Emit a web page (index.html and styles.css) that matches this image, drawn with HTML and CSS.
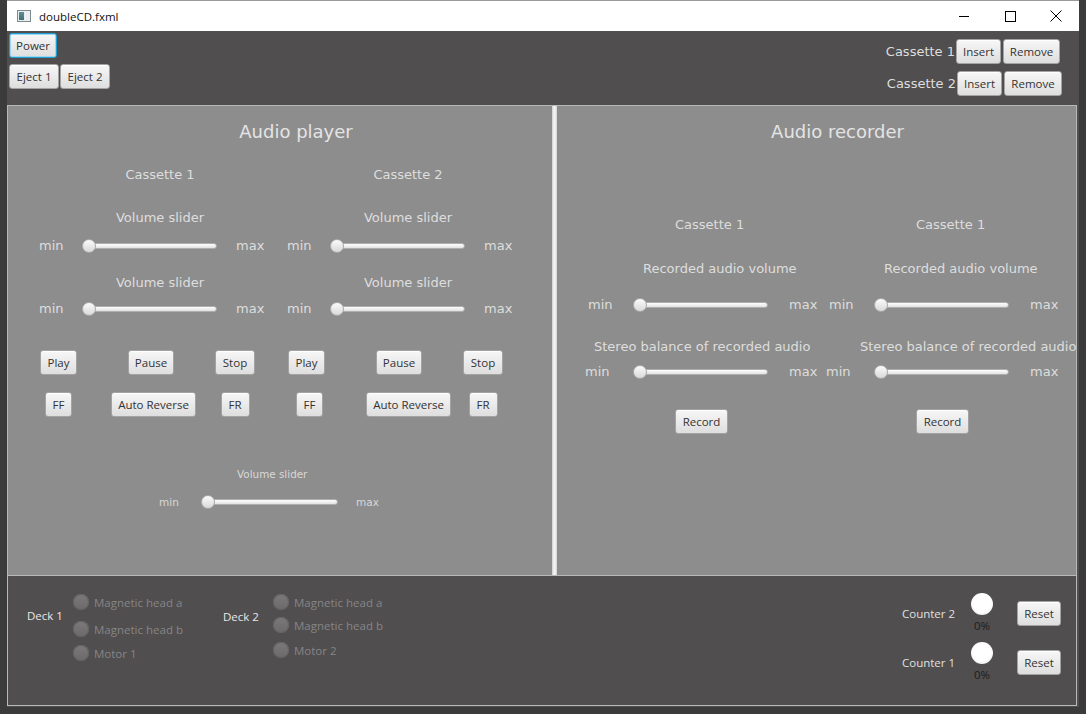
FILE: index.html
```html
<!DOCTYPE html>
<html>
<head>
<meta charset="utf-8">
<title>doubleCD.fxml</title>
<link rel="stylesheet" href="styles.css">
</head>
<body>
<div class="window">
  <div class="titlebar">
    <span class="app-icon"><span class="app-icon-pane"></span></span>
    <span class="title">doubleCD.fxml</span>
    <div class="caption">
      <span class="cap-btn"><svg width="10" height="10" viewBox="0 0 10 10"><path d="M0 5.5H10" stroke="#000" stroke-width="1"/></svg></span>
      <span class="cap-btn"><svg width="11" height="11" viewBox="0 0 11 11"><rect x="0.5" y="0.5" width="10" height="10" fill="none" stroke="#000" stroke-width="1"/></svg></span>
      <span class="cap-btn"><svg width="12" height="12" viewBox="0 0 12 12"><path d="M0.5 0.5L11.5 11.5M11.5 0.5L0.5 11.5" stroke="#000" stroke-width="1"/></svg></span>
    </div>
  </div>

  <div class="content">
    <div class="topbar">
      <div class="top-left">
        <button class="btn btn-focus w-power">Power</button>
        <div class="eject-row">
          <button class="btn w-eject">Eject 1</button>
          <button class="btn w-eject">Eject 2</button>
        </div>
      </div>
      <div class="top-right">
        <div class="cas-row cas-row-1">
          <span class="lbl cas-label">Cassette 1</span>
          <button class="btn w-insert">Insert</button>
          <button class="btn w-remove">Remove</button>
        </div>
        <div class="cas-row cas-row-2">
          <span class="lbl cas-label">Cassette 2</span>
          <button class="btn w-insert">Insert</button>
          <button class="btn w-remove2">Remove</button>
        </div>
      </div>
    </div>

    <div class="stage">
      <div class="panels">
        <section class="panel player">
          <div class="lbl p-title">Audio player</div>
          <div class="p-cols">
            <div class="p-col">
              <div class="lbl cas-title">Cassette 1</div>
              <div class="lbl vol-title vt1">Volume slider</div>
              <div class="srow ps1">
                <span class="lbl smin">min</span>
                <div class="slider"><div class="track"></div><div class="thumb"></div></div>
                <span class="lbl smax">max</span>
              </div>
              <div class="lbl vol-title vt2">Volume slider</div>
              <div class="srow ps2">
                <span class="lbl smin">min</span>
                <div class="slider"><div class="track"></div><div class="thumb"></div></div>
                <span class="lbl smax">max</span>
              </div>
              <div class="brow brow1">
                <button class="btn w-play">Play</button>
                <button class="btn w-pause">Pause</button>
                <button class="btn w-stop">Stop</button>
              </div>
              <div class="brow brow2">
                <button class="btn w-ff">FF</button>
                <button class="btn w-ar ar1">Auto Reverse</button>
                <button class="btn w-fr">FR</button>
              </div>
            </div>
            <div class="p-col">
              <div class="lbl cas-title">Cassette 2</div>
              <div class="lbl vol-title vt1">Volume slider</div>
              <div class="srow ps1">
                <span class="lbl smin">min</span>
                <div class="slider"><div class="track"></div><div class="thumb"></div></div>
                <span class="lbl smax">max</span>
              </div>
              <div class="lbl vol-title vt2">Volume slider</div>
              <div class="srow ps2">
                <span class="lbl smin">min</span>
                <div class="slider"><div class="track"></div><div class="thumb"></div></div>
                <span class="lbl smax">max</span>
              </div>
              <div class="brow brow1">
                <button class="btn w-play">Play</button>
                <button class="btn w-pause">Pause</button>
                <button class="btn w-stop">Stop</button>
              </div>
              <div class="brow brow2">
                <button class="btn w-ff ff2">FF</button>
                <button class="btn w-ar ar2">Auto Reverse</button>
                <button class="btn w-fr">FR</button>
              </div>
            </div>
          </div>
          <div class="master">
            <div class="lbl master-title">Volume slider</div>
            <div class="srow master-row">
              <span class="lbl smin">min</span>
              <div class="slider slider-master"><div class="track"></div><div class="thumb"></div></div>
              <span class="lbl smax">max</span>
            </div>
          </div>
        </section>

        <div class="divider"></div>

        <section class="panel recorder">
          <div class="lbl r-title">Audio recorder</div>
          <div class="r-cols">
            <div class="r-col">
              <div class="lbl rc-cas">Cassette 1</div>
              <div class="lbl rc-rec">Recorded audio volume</div>
              <div class="srow rs1">
                <span class="lbl smin">min</span>
                <div class="slider"><div class="track"></div><div class="thumb"></div></div>
                <span class="lbl smax">max</span>
              </div>
              <div class="lbl rc-stereo">Stereo balance of recorded audio</div>
              <div class="srow rs2">
                <span class="lbl smin">min</span>
                <div class="slider"><div class="track"></div><div class="thumb"></div></div>
                <span class="lbl smax">max</span>
              </div>
              <button class="btn w-record">Record</button>
            </div>
            <div class="r-col">
              <div class="lbl rc-cas">Cassette 1</div>
              <div class="lbl rc-rec">Recorded audio volume</div>
              <div class="srow rs1">
                <span class="lbl smin">min</span>
                <div class="slider"><div class="track"></div><div class="thumb"></div></div>
                <span class="lbl smax">max</span>
              </div>
              <div class="lbl rc-stereo rc-stereo-b">Stereo balance of recorded audio</div>
              <div class="srow rs2">
                <span class="lbl smin">min</span>
                <div class="slider"><div class="track"></div><div class="thumb"></div></div>
                <span class="lbl smax">max</span>
              </div>
              <button class="btn w-record">Record</button>
            </div>
          </div>
        </section>
      </div>

      <div class="status">
        <div class="deck deck-1">
          <span class="deck-label">Deck 1</span>
          <div class="radio-list">
            <div class="radio-row"><span class="radio"></span><span class="radio-text">Magnetic head a</span></div>
            <div class="radio-row d1r2"><span class="radio"></span><span class="radio-text">Magnetic head b</span></div>
            <div class="radio-row d1r3"><span class="radio"></span><span class="radio-text">Motor 1</span></div>
          </div>
        </div>
        <div class="deck deck-2">
          <span class="deck-label">Deck 2</span>
          <div class="radio-list">
            <div class="radio-row"><span class="radio"></span><span class="radio-text">Magnetic head a</span></div>
            <div class="radio-row d2r2"><span class="radio"></span><span class="radio-text">Magnetic head b</span></div>
            <div class="radio-row d2r3"><span class="radio"></span><span class="radio-text">Motor 2</span></div>
          </div>
        </div>
        <div class="counters">
          <div class="counter-row">
            <span class="c-label">Counter 2</span>
            <div class="c-dial"><span class="c-circle"></span><span class="c-pct">0%</span></div>
            <button class="btn w-reset">Reset</button>
          </div>
          <div class="counter-row">
            <span class="c-label">Counter 1</span>
            <div class="c-dial"><span class="c-circle"></span><span class="c-pct">0%</span></div>
            <button class="btn w-reset">Reset</button>
          </div>
        </div>
      </div>
    </div>
  </div>
</div>
</body>
</html>
```

FILE: styles.css
```css
* { box-sizing: border-box; }

html, body {
  margin: 0;
  padding: 0;
}

body {
  width: 1086px;
  height: 714px;
  overflow: hidden;
  background: #3b3b3b;
  font-family: "Open Sans", "Liberation Sans", sans-serif;
}

.window {
  margin-left: 7px;
  width: 1072px;
  height: 707px;
  display: flex;
  flex-direction: column;
}

/* ---------- title bar ---------- */
.titlebar {
  height: 31px;
  background: #ffffff;
  display: flex;
  align-items: center;
  border-top: 1px solid #9a9a9a;
}

.app-icon {
  margin-left: 10px;
  width: 14px;
  height: 12px;
  border: 1px solid #7f8a8e;
  background: #e9eef0;
  display: flex;
  padding: 1px;
}

.app-icon-pane {
  width: 5px;
  height: 8px;
  background: linear-gradient(#5f8f95, #3e6f73);
}

.title {
  margin-left: 8px;
  font-size: 11.5px;
  color: #111;
}

.caption {
  margin-left: auto;
  display: flex;
}

.cap-btn {
  width: 46px;
  height: 30px;
  display: flex;
  align-items: center;
  justify-content: center;
}

/* ---------- content ---------- */
.content {
  flex: 1;
  background: #504e4f;
  display: flex;
  flex-direction: column;
}

.topbar {
  height: 74px;
  display: flex;
  justify-content: space-between;
}

.top-left {
  padding: 2px 0 0 2px;
  display: flex;
  flex-direction: column;
  align-items: flex-start;
}

.eject-row {
  margin-top: 6px;
  display: flex;
  gap: 1px;
}

.top-right {
  padding-top: 8px;
  display: flex;
  flex-direction: column;
  align-items: flex-end;
  gap: 7px;
}

.cas-row {
  display: flex;
  align-items: center;
  gap: 2px;
}

.cas-row-1 { padding-right: 19px; }
.cas-row-2 { padding-right: 17px; }

.cas-label {
  margin-right: -1px;
  color: #e2e2e2;
}

/* ---------- buttons ---------- */
.btn {
  font-family: "Open Sans", "Liberation Sans", sans-serif;
  font-size: 11.5px;
  color: #333333;
  height: 25px;
  padding: 0;
  border: 1px solid #a3a3a3;
  border-radius: 3px;
  background: linear-gradient(#f7f7f7, #dedede);
  box-shadow: inset 0 1px 0 #ffffff;
  display: inline-flex;
  align-items: center;
  justify-content: center;
  white-space: nowrap;
  flex: none;
}

.btn-focus {
  border-color: #1d9fd6;
  box-shadow: inset 0 0 0 1px #9fd6ee;
}

.w-power { width: 48px; }
.w-eject { width: 50px; }
.w-insert { width: 45px; }
.w-remove { width: 57px; }
.w-remove2 { width: 58px; }
.w-play { width: 37px; }
.w-pause { width: 46px; }
.w-stop { width: 40px; }
.w-ff { width: 27px; }
.w-ar { width: 85px; }
.w-fr { width: 29px; }
.w-record { width: 53px; }
.w-reset { width: 44px; }

/* ---------- labels ---------- */
.lbl {
  font-family: "DejaVu Sans", Verdana, sans-serif;
  font-size: 13px;
  line-height: 16px;
  color: #dedede;
  white-space: nowrap;
}

/* ---------- stage ---------- */
.stage {
  width: 1070px;
  height: 601px;
  border: 1px solid #b8b8b8;
  display: flex;
  flex-direction: column;
}

.panels {
  height: 470px;
  display: flex;
  border-bottom: 1px solid #b8b8b8;
}

.panel {
  background: #8d8d8d;
  overflow: hidden;
}

.player { width: 544px; }
.recorder { width: 519px; }

.divider {
  width: 5px;
  background: linear-gradient(to right, #cfcfcf, #f4f4f4 40%, #f4f4f4 60%, #d2d2d2);
}

/* ---------- player ---------- */
.p-title,
.r-title {
  font-size: 18px;
  line-height: 22px;
  color: #e4e4e4;
  text-align: center;
  padding-top: 15px;
}

.p-title { padding-left: 32px; }

.p-cols {
  display: flex;
  padding-left: 22px;
  margin-top: 24px;
}

.p-col {
  width: 248px;
  display: flex;
  flex-direction: column;
}

.cas-title,
.vol-title {
  padding-left: 12px;
  text-align: center;
}

.vt1 { margin-top: 27px; }
.vt2 { margin-top: 21px; }

.srow {
  display: flex;
  align-items: center;
  height: 16px;
}

.ps1 { margin-top: 12px; padding-left: 9px; }
.ps2 { margin-top: 10px; padding-left: 9px; }

.ps1 .smin,
.ps2 .smin { width: 43px; }

.ps1 .smax,
.ps2 .smax { margin-left: 19px; }

.slider {
  position: relative;
  width: 135px;
  height: 14px;
  flex: none;
}

.slider-master { width: 137px; }

.track {
  margin-top: 4px;
  height: 6px;
  border-radius: 3px;
  border: 1px solid #aeaeae;
  background: linear-gradient(#fdfdfd, #e2e2e2);
}

.thumb {
  position: absolute;
  left: 0;
  top: 0;
  width: 14px;
  height: 14px;
  border-radius: 50%;
  border: 1px solid #a9a9a9;
  background: linear-gradient(#fbfbfb, #d9d9d9);
}

.brow {
  display: grid;
  grid-template-columns: 57px 128px 40px;
  justify-items: center;
}

.brow1 { margin-top: 33px; }
.brow2 { margin-top: 17px; }

.ar1 { margin-left: 5px; }
.ff2 { margin-left: 6px; }
.ar2 { margin-left: 19px; }

.master {
  margin-top: 50px;
  padding-left: 151px;
}

.master-title {
  font-size: 10.4px;
  line-height: 14px;
  margin-left: 78px;
  color: #d8d8d8;
}

.master-row {
  margin-top: 13px;
}

.master-row .lbl {
  font-size: 10.5px;
  color: #d8d8d8;
}

.master-row .smin { width: 42px; }
.master-row .smax { margin-left: 18px; }

/* ---------- recorder ---------- */
.r-title { padding-left: 42px; }

.r-cols {
  display: flex;
  padding-left: 28px;
  margin-top: 74px;
}

.r-col {
  width: 241px;
  flex: none;
  display: flex;
  flex-direction: column;
  align-items: flex-start;
}

.rc-cas { margin-left: 90px; }

.rc-rec {
  margin-top: 28px;
  margin-left: 58px;
}

.rs1 {
  margin-top: 20px;
  padding-left: 3px;
}

.rs1 .smin { width: 45px; }

.rc-stereo {
  margin-top: 26px;
  margin-left: 9px;
}

.rc-stereo-b { margin-left: 34px; }

.rs2 { margin-top: 9px; }

.rs2 .smin { width: 48px; }

.rs1 .smax,
.rs2 .smax { margin-left: 21px; }

.w-record {
  margin-top: 29px;
  margin-left: 90px;
}

/* ---------- status ---------- */
.status {
  flex: 1;
  display: flex;
  align-items: flex-start;
}

.deck {
  display: flex;
  align-items: flex-start;
}

.deck-1 {
  width: 215px;
  padding-left: 19px;
}

.deck-label {
  font-size: 11.5px;
  line-height: 16px;
  color: #e8e8e8;
  flex: none;
}

.deck-1 .deck-label {
  width: 46px;
  margin-top: 32px;
}

.deck-2 .deck-label {
  width: 50px;
  margin-top: 33px;
}

.radio-list {
  padding-top: 18px;
  display: flex;
  flex-direction: column;
}

.radio-row {
  display: flex;
  align-items: center;
  height: 16px;
}

.d1r2 { margin-top: 11px; }
.d1r3 { margin-top: 8px; }
.d2r2 { margin-top: 7px; }
.d2r3 { margin-top: 9px; }

.radio {
  width: 16px;
  height: 16px;
  border-radius: 50%;
  background: linear-gradient(#7b797a, #6b696a);
  box-shadow: inset 0 0 0 1px #646263;
  flex: none;
}

.radio-text {
  margin-left: 5px;
  font-size: 11.5px;
  color: #878586;
  white-space: nowrap;
}

.counters {
  margin-left: auto;
  padding-top: 17px;
  padding-right: 15px;
  display: flex;
  flex-direction: column;
  gap: 9px;
}

.counter-row {
  display: flex;
  align-items: center;
  height: 40px;
}

.c-label {
  width: 69px;
  font-size: 11.5px;
  color: #e0e0e0;
  white-space: nowrap;
}

.c-dial {
  width: 22px;
  display: flex;
  flex-direction: column;
  align-items: center;
}

.c-circle {
  width: 22px;
  height: 22px;
  border-radius: 50%;
  background: radial-gradient(circle at 50% 45%, #ffffff 55%, #efefef 75%, #cfcfcf 100%);
}

.c-pct {
  margin-top: 4px;
  font-size: 11.5px;
  line-height: 14px;
  color: #1c1c1c;
}

.w-reset { margin-left: 24px; }
```
